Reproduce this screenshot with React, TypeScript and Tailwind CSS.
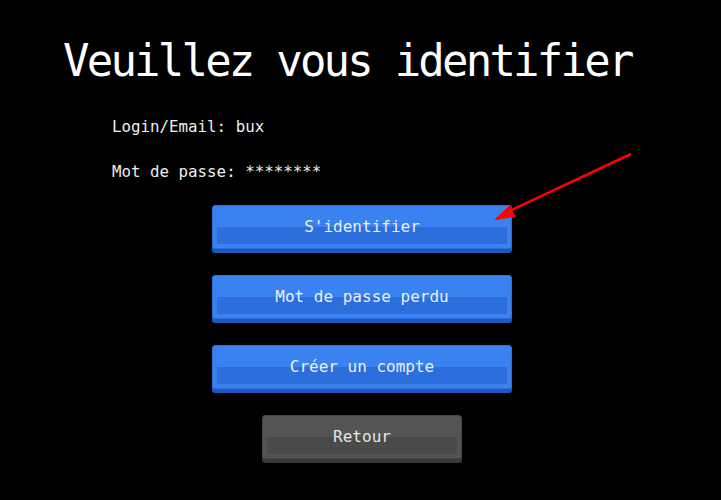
import React from 'react';

const MONO = "font-['DejaVu_Sans_Mono',monospace]";

function PixelButton({ label, grey = false, wide = true }: { label: string; grey?: boolean; wide?: boolean }) {
  const outer = grey
    ? "bg-[#545454] border-[#474747] shadow-[0_4px_0_#3a3a3a]"
    : "bg-[#3a82f0] border-[#2a6edb] shadow-[0_4px_0_#1d58bd]";
  const band = grey ? "bg-[#4a4a4a]" : "bg-[#2b6edc]";
  const text = grey ? "text-[#e6e6e6]" : "text-[#e9eefa]";
  return (
    <div className={`relative ${wide ? "w-[300px]" : "w-[200px]"} h-[44px] rounded-[3px] border ${outer}`}>
      {/* darker lower band */}
      <div className={`absolute left-[4px] right-[4px] top-[21px] h-[17px] ${band}`} />
      <div className={`relative h-full flex items-center justify-center ${text} text-[16px] ${MONO}`}>
        {label}
      </div>
    </div>
  );
}

export default function App() {
  return (
    <div className={`relative w-[721px] h-[500px] bg-black text-white overflow-hidden ${MONO}`}>
      <h1 className="pl-[63px] pt-[37px] text-[44px] leading-[48px] tracking-[-2.8px] text-white">
        Veuillez vous identifier
      </h1>

      <div className="pl-[112px] pt-[32px] text-[15.8px] leading-[20px] text-[#eeeeee] space-y-[25px]">
        <p>Login/Email: bux</p>
        <p>Mot de passe: ********</p>
      </div>

      <div className="flex flex-col items-center pl-[3px] pt-[23px] gap-[26px]">
        <PixelButton label="S'identifier" />
        <PixelButton label="Mot de passe perdu" />
        <PixelButton label="Créer un compte" />
        <PixelButton label="Retour" grey wide={false} />
      </div>

      {/* red annotation arrow */}
      <svg className="absolute left-0 top-0" width="721" height="500" viewBox="0 0 721 500">
        <line x1="631" y1="154" x2="505" y2="213" stroke="#ff0000" strokeWidth="2.5" />
        <polygon points="494,220 510,205 516,217" fill="#ff0000" />
      </svg>
    </div>
  );
}
